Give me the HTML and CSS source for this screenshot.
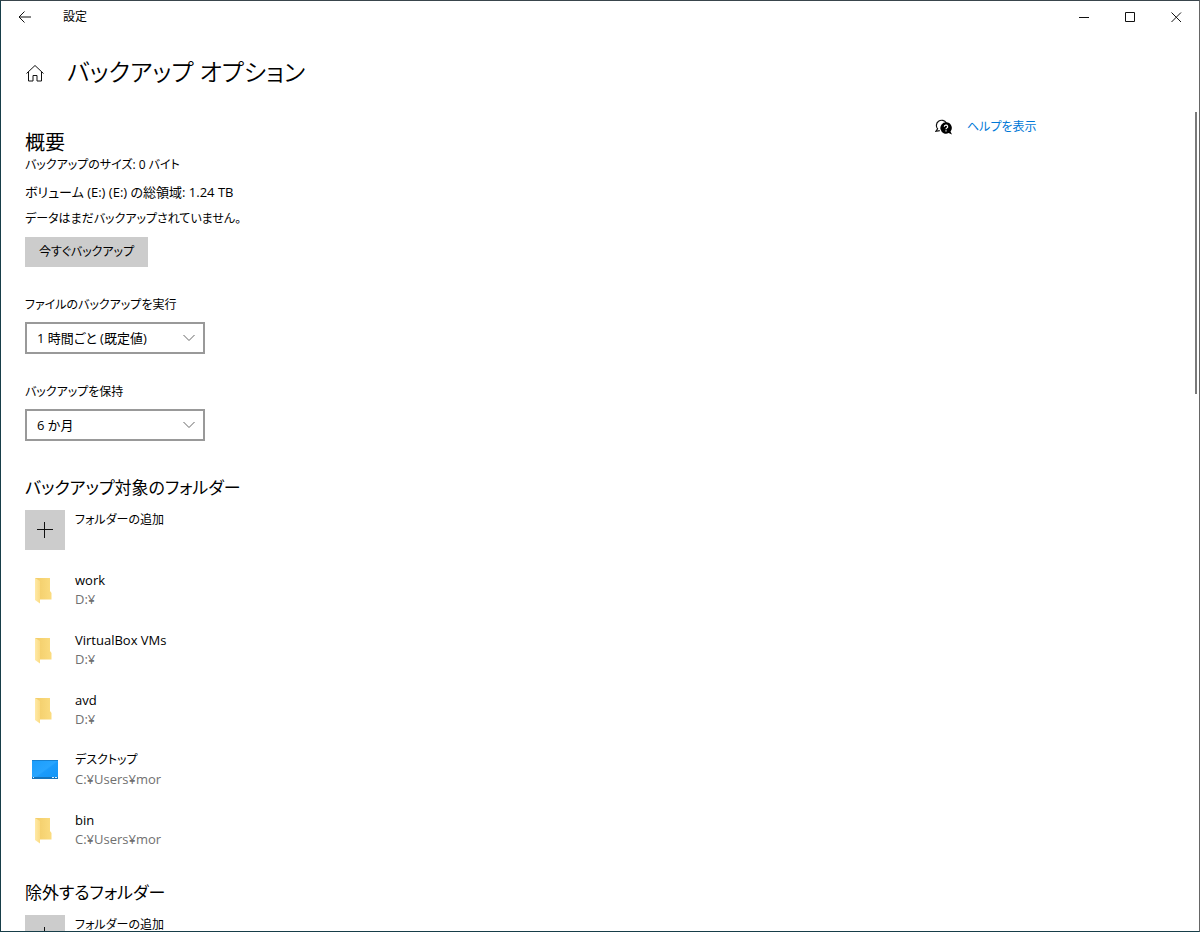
FILE: index.html
```html
<!DOCTYPE html>
<html lang="ja">
<head>
<meta charset="utf-8">
<title>設定</title>
<link rel="stylesheet" href="styles.css">
</head>
<body>
<div class="window">

<header class="titlebar">
  <button class="back" aria-label="戻る"><svg width="14" height="12" viewBox="0 0 14 12"><path d="M13 6H1M6.500 .5L1 6l5.500 5.500"/></svg></button>
  <span class="app-name">設定</span>
  <div class="controls">
    <button aria-label="最小化"><svg width="11" height="11" viewBox="0 0 11 11"><path d="M0 5.500h10"/></svg></button>
    <button aria-label="最大化"><svg width="11" height="11" viewBox="0 0 11 11"><path d="M.5 .5h9v9H.5z"/></svg></button>
    <button aria-label="閉じる"><svg width="11" height="11" viewBox="0 0 11 11"><path d="M.5 .5l9.500 9.500M10 .5L.5 10"/></svg></button>
  </div>
</header>

<div class="page-head">
  <a class="home" href="#" aria-label="ホーム"><svg width="20" height="20" viewBox="0 0 20 20"><path d="M1.500 11.500L10 3.500l8.500 8M3.500 10v9h4.500V13.500h4v5.500h4.500V10"/></svg></a>
  <h1>バックアップ オプション</h1>
</div>

<div class="content">
  <main>
    <section class="summary">
      <h2>概要</h2>
      <p>バックアップのサイズ: 0 バイト</p>
      <p class="volume">ボリューム (E:) (E:) の総領域: 1.24 TB</p>
      <p>データはまだバックアップされていません。</p>
      <button class="backup-now">今すぐバックアップ</button>
    </section>

    <div class="field">
      <label for="interval">ファイルのバックアップを実行</label>
      <div class="select">
        <select id="interval"><option>1 時間ごと (既定値)</option></select>
        <svg width="12" height="8" viewBox="0 0 12 8"><path d="M.5 1L6 6.500 11.500 1"/></svg>
      </div>
    </div>
    <div class="field">
      <label for="keep">バックアップを保持</label>
      <div class="select">
        <select id="keep"><option>6 か月</option></select>
        <svg width="12" height="8" viewBox="0 0 12 8"><path d="M.5 1L6 6.500 11.500 1"/></svg>
      </div>
    </div>

    <section class="folders">
      <h2>バックアップ対象のフォルダー</h2>
      <button class="item add"><span class="tile"><svg width="16" height="16" viewBox="0 0 16 16"><path d="M0 7.500h16M7.500 0v16"/></svg></span><span>フォルダーの追加</span></button>
      <ul>
        <li class="item"><svg class="icon" viewBox="0 0 40 40"><use href="#folder"/></svg><div>work<small>D:¥</small></div></li>
        <li class="item"><svg class="icon" viewBox="0 0 40 40"><use href="#folder"/></svg><div>VirtualBox VMs<small>D:¥</small></div></li>
        <li class="item"><svg class="icon" viewBox="0 0 40 40"><use href="#folder"/></svg><div>avd<small>D:¥</small></div></li>
        <li class="item"><svg class="icon" viewBox="0 0 40 40"><use href="#desktop"/></svg><div><span class="kana">デスクトップ</span><small>C:¥Users¥mor</small></div></li>
        <li class="item"><svg class="icon" viewBox="0 0 40 40"><use href="#folder"/></svg><div>bin<small>C:¥Users¥mor</small></div></li>
      </ul>
    </section>

    <section class="folders">
      <h2>除外するフォルダー</h2>
      <button class="item add"><span class="tile"><svg width="16" height="16" viewBox="0 0 16 16"><path d="M0 7.500h16M7.500 0v16"/></svg></span><span>フォルダーの追加</span></button>
    </section>
  </main>

  <aside>
    <svg width="18" height="18" viewBox="0 0 18 18">
      <path d="M2.800 11.200A5.300 5.300 0 1 1 11.300 5" fill="none" stroke="#111" stroke-width="1.200"/>
      <path d="M2.800 10.500L.8 13.300l4-.6" fill="none" stroke="#111" stroke-width="1.200"/>
      <path d="M11 4.300a5.700 5.700 0 1 0 2.600 10.800l3.400 1.500-1.500-3A5.700 5.700 0 0 0 11 4.300z" fill="#000"/>
      <path d="M9.300 8.700a1.700 1.500 0 1 1 2.500 1.300q-.8.400-.8 1.200M11 12.200v1.200" fill="none" stroke="#fff" stroke-width="1.200"/>
    </svg>
    <a href="#">ヘルプを表示</a>
  </aside>
  <div class="scrollbar"></div>
</div>

</div>

<svg class="defs" width="0" height="0">
  <defs>
    <linearGradient id="gold" x2="1"><stop offset="0" stop-color="#f2cc68"/><stop offset="1" stop-color="#fbdc80"/></linearGradient>
    <linearGradient id="flap" x2="1"><stop offset="0" stop-color="#ffe9a6"/><stop offset="1" stop-color="#fbdc85"/></linearGradient>
    <linearGradient id="blue" x2="1" y2="1"><stop offset="0" stop-color="#1b9dfb"/><stop offset=".5" stop-color="#27a5ff"/><stop offset=".55" stop-color="#1a9bfb"/><stop offset="1" stop-color="#1194f6"/></linearGradient>
    <symbol id="folder" viewBox="0 0 40 40">
      <path d="M10 8h15v13l1.500 2v6.500H13z" fill="url(#gold)"/>
      <path d="M10 8l5 3v22.500L10 30z" fill="url(#flap)"/>
    </symbol>
    <symbol id="desktop" viewBox="0 0 40 40">
      <path d="M7 10h26v19H7z" fill="url(#blue)"/>
      <path d="M7 10h26v1H7z" fill="#1780cf"/>
      <path d="M7 27h26v2H7z" fill="#1474bd"/>
      <path d="M8 27.500h1M27 27.500h2M30 27.500h2" stroke="#d8efff"/>
    </symbol>
  </defs>
</svg>
</body>
</html>
```
FILE: styles.css
```css
/* Settings window */

* { box-sizing: border-box; }

body
{ margin: 0;
  color: #000;
  background: #fff;
  font: 12px/20px "Open Sans", "Noto Sans CJK JP", sans-serif;
  font-feature-settings: "palt";
}

h1, h2, p, ul { margin: 0; padding: 0; font-weight: normal; }
ul { list-style: none; }
svg { display: block; flex: none; }

button, select
{ font: inherit;
  font-feature-settings: inherit;
  color: inherit;
  border: 0;
  border-radius: 0;
  padding: 0;
  background: none;
}

.defs { position: absolute; }

.window
{ display: flex;
  flex-direction: column;
  height: 100vh;
  overflow: hidden;
  border: 1px solid #173e49;
  border-top-color: #39454c;
  border-right-color: #666;
}

/* Title bar */

.titlebar
{ display: flex;
  flex: none;
  align-items: center;
  height: 32px;
}

.titlebar svg, .home svg, .tile svg, .select svg
{ fill: none;
  stroke: #111;
}

.back { display: grid; place-items: center; width: 48px; height: 32px; }
.app-name { margin-left: 14px; }
.controls { display: flex; margin-left: auto; }
.controls button { display: grid; place-items: center; width: 46px; height: 32px; }

.page-head
{ display: flex;
  flex: none;
  align-items: center;
  gap: 22px;
  height: 78px;
  padding-left: 24px;
}

h1 { font-size: 24px; line-height: 36px; font-weight: 350; }

/* Content */

.content
{ position: relative;
  display: grid;
  grid-template-columns: 1fr 264px;
  flex: 1;
  min-height: 0;
  overflow: hidden;
}

main { padding: 20px 24px 0; }
h2 { font-size: 17px; line-height: 24px; }

.summary h2 { font-size: 20px; }
.summary p { margin-bottom: 7px; }
.summary .volume { font-size: 13px; }

.backup-now
{ height: 30px;
  margin-top: 1px;
  padding: 0 14px;
  background: #ccc;
}

.field { margin-top: 28px; }
.field label { display: block; margin-bottom: 7px; }

.select { position: relative; width: 180px; }
.select select
{ display: block;
  width: 100%;
  height: 32px;
  padding: 0 32px 0 10px;
  border: 2px solid #999;
  appearance: none;
  background: #fff;
  font-size: 13px;
}
.select svg
{ position: absolute;
  right: 10px;
  top: 12px;
  stroke: #666;
  pointer-events: none;
}

.folders { margin-top: 35px; }
.folders + .folders { margin-top: 31px; }
.folders h2 { margin-bottom: 10px; }

.item
{ display: flex;
  gap: 10px;
  height: 40px;
  text-align: left;
}
li.item { margin-top: 20px; font-size: 13px; }
.item small { display: block; font-size: 13px; line-height: 18px; color: #707070; }
.kana { display: block; font-size: 12px; }

.tile
{ display: grid;
  place-items: center;
  width: 40px;
  height: 40px;
  background: #ccc;
}
.icon { width: 40px; height: 40px; }

aside
{ display: flex;
  align-items: center;
  align-self: start;
  gap: 14px;
  margin-top: 6px;
}
aside a { color: #0078d7; text-decoration: none; }

.scrollbar
{ position: absolute;
  top: 1px;
  right: 2px;
  width: 2px;
  height: 282px;
  background: #7a7a7a;
}
```
